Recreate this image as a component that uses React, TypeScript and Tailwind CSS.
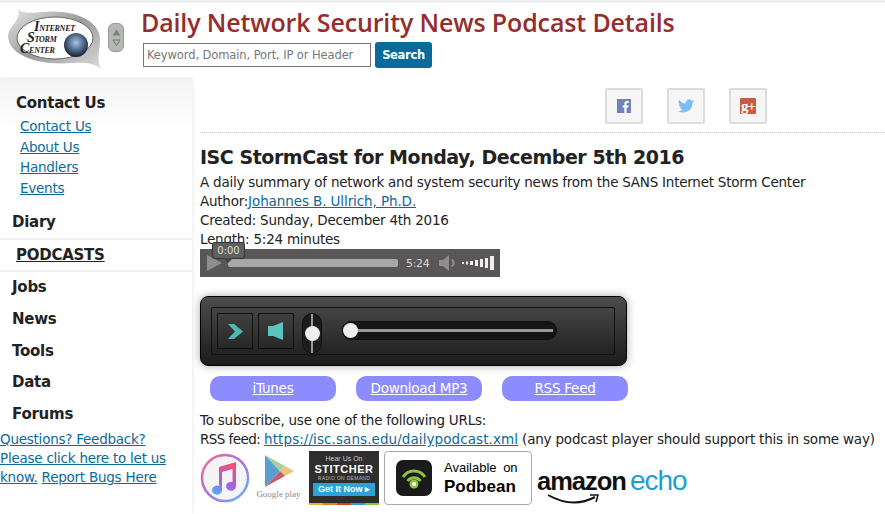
const SideHeading = ({ label }: { label: string }) => (
  <a className="block pl-3 text-[15px] font-bold leading-[22px] tracking-[-0.25px] text-[#222]">{label}</a>
);

const Logo = () => (
  <svg width="104" height="70" viewBox="0 0 104 70" className="shrink-0">
    <defs>
      <linearGradient id="ring" x1="0" y1="0" x2="1" y2="1">
        <stop offset="0" stopColor="#e8e8e8" />
        <stop offset="0.5" stopColor="#9a9a9a" />
        <stop offset="1" stopColor="#dadada" />
      </linearGradient>
      <radialGradient id="globe" cx="0.5" cy="0.4" r="0.6">
        <stop offset="0" stopColor="#a8c4e4" />
        <stop offset="0.6" stopColor="#47627f" />
        <stop offset="1" stopColor="#15202c" />
      </radialGradient>
    </defs>
    <path d="M14 5 C17 11 26 10 40 9 C70 6 96 18 96 36 C96 48 92 56 97 66 C90 60 82 59 68 60 C34 63 4 52 4 33 C4 23 18 18 14 5Z" fill="url(#ring)" />
    <ellipse cx="51" cy="35" rx="38" ry="21" fill="#fff" stroke="#666" strokeWidth="1" />
    <circle cx="72" cy="42" r="12" fill="url(#globe)" />
    <text x="30" y="28" fontFamily="'Liberation Serif', serif" fontSize="8" fontWeight="700" fontStyle="italic" fill="#222">
      <tspan fontSize="14">I</tspan>NTERNET
    </text>
    <text x="23" y="39" fontFamily="'Liberation Serif', serif" fontSize="8" fontWeight="700" fontStyle="italic" fill="#222">
      <tspan fontSize="14">S</tspan>TORM
    </text>
    <text x="16" y="50" fontFamily="'Liberation Serif', serif" fontSize="8" fontWeight="700" fontStyle="italic" fill="#222">
      <tspan fontSize="14">C</tspan>ENTER
    </text>
  </svg>
);

const ArrowPill = () => (
  <div className="mt-[20px] flex h-[29px] w-[16px] shrink-0 flex-col items-center justify-center gap-[3px] rounded-[6px] border border-[#999] bg-[#b4b9b4]">
    <svg width="9" height="7" viewBox="0 0 9 7"><path d="M4.5 0.5 8.5 6.5H0.5Z" fill="#7b827c" /></svg>
    <svg width="9" height="7" viewBox="0 0 9 7"><path d="M1 1H8L4.5 6.5Z" fill="none" stroke="#6f766f" /></svg>
  </div>
);

const SocialButton = ({ children }: { children: React.ReactNode }) => (
  <div className="flex h-[36px] w-[38px] items-center justify-center rounded-[2px] border-2 border-[#dcdcdc] bg-[#f6f6f6]">
    {children}
  </div>
);

const PillLink = ({ label }: { label: string }) => (
  <a className="flex h-[25px] w-[126px] items-center justify-center rounded-[10px] bg-[#8c8cff] text-white underline">
    {label}
  </a>
);

const AudioBar = () => (
  <div className="relative flex h-[28px] w-[300px] items-center bg-[#585656]">
    <svg width="16" height="16" viewBox="0 0 16 16" className="ml-[7px] shrink-0">
      <path d="M0 0 15 8 0 16Z" fill="#8e8e8e" />
    </svg>
    <div className="ml-[5px] h-[8px] w-[170px] rounded-[2px] bg-[#a8a8a8]" />
    <span className="ml-[8px] text-[11px] tracking-[-0.3px] text-[#d8d8d8]">5:24</span>
    <svg width="20" height="18" viewBox="0 0 20 18" className="ml-[8px] shrink-0">
      <path d="M1 6H5L11 1V17L5 12H1Z" fill="#8e8e8e" />
      <path d="M14 5.5Q17 9 14 12.5" fill="none" stroke="#8e8e8e" strokeWidth="2" />
    </svg>
    <svg width="34" height="14" viewBox="0 0 34 14" className="ml-[4px] shrink-0">
      <rect x="0" y="6" width="2" height="2" fill="#eee" />
      <rect x="4" y="5.5" width="2" height="3" fill="#eee" />
      <rect x="8" y="5" width="3" height="4" fill="#eee" />
      <rect x="13" y="4" width="3" height="6" fill="#eee" />
      <rect x="18" y="3" width="3" height="8" fill="#eee" />
      <rect x="23" y="2" width="3" height="10" fill="#eee" />
      <rect x="28" y="0" width="4" height="14" fill="#eee" />
    </svg>
    {/* time tooltip */}
    <div className="absolute left-[12px] top-[-7px] flex h-[17px] w-[33px] items-center justify-center rounded-[3px] border border-[#333] bg-[#5f5f5f] text-[10px] tracking-normal text-[#ddd]">
      0:00
      <span className="absolute bottom-[-5px] left-[10px] h-0 w-0 border-x-[5px] border-t-[5px] border-x-transparent border-t-[#444]" />
    </div>
  </div>
);

const SquareButton = ({ children }: { children: React.ReactNode }) => (
  <div className="flex h-[36px] w-[36px] shrink-0 items-center justify-center border border-[#111]">{children}</div>
);

const Player = () => (
  <div className="flex h-[70px] w-[427px] items-center rounded-[8px] border border-[#000] bg-linear-to-b from-[#4c4c4c] to-[#1c1c1c] pl-[10px] shadow-[0_0_8px_rgba(0,0,0,0.35)]">
    <div className="flex h-[48px] w-[404px] items-start gap-[5px] rounded-[2px] border border-[#111] pl-[5px] pt-[5px]">
      <SquareButton>
        <svg width="15" height="15" viewBox="0 0 15 15">
          <path d="M0 0H6L15 7.5 6 15H0L7 7.5Z" fill="#4fb8b4" />
        </svg>
      </SquareButton>
      <SquareButton>
        <svg width="16" height="18" viewBox="0 0 16 18">
          <path d="M0 4H5L15 0V18L5 14H0Z" fill="#5cc4c0" />
        </svg>
      </SquareButton>
      <div className="relative ml-[3px] flex h-[41px] w-[20px] shrink-0 justify-center rounded-[10px] border border-[#111] bg-[#1c1c1c]">
        <div className="h-full w-[2px] bg-[#999]" />
        <div className="absolute top-[12px] h-[15px] w-[15px] rounded-full bg-[#eee]" />
      </div>
      <div className="relative ml-[15px] mt-[8px] flex h-[19px] w-[215px] shrink-0 items-center rounded-[9px] border border-[#111] bg-[#151515] px-[3px]">
        <div className="h-[3px] w-full bg-[#999]" />
        <div className="absolute left-0 h-[15px] w-[15px] rounded-full bg-[#eee]" />
      </div>
    </div>
  </div>
);

const ItunesBadge = () => (
  <svg width="50" height="50" viewBox="0 0 50 50" className="shrink-0">
    <defs>
      <linearGradient id="itring" x1="0" y1="0" x2="1" y2="1">
        <stop offset="0" stopColor="#f0708a" />
        <stop offset="0.5" stopColor="#b06ce0" />
        <stop offset="1" stopColor="#50c0f8" />
      </linearGradient>
      <linearGradient id="itnote" x1="0.7" y1="0" x2="0.3" y2="1">
        <stop offset="0" stopColor="#f8506c" />
        <stop offset="0.6" stopColor="#a860e0" />
        <stop offset="1" stopColor="#58a8f0" />
      </linearGradient>
    </defs>
    <circle cx="25" cy="25" r="23" fill="#f4f4f6" stroke="url(#itring)" strokeWidth="2.5" />
    <path d="M19 14 36 9V33A5 4.5 0 1 1 32.5 29V16L22 19V37A5 4.5 0 1 1 19 33Z" fill="url(#itnote)" />
  </svg>
);

const GooglePlayBadge = () => (
  <div className="ml-[2px] flex w-[43px] shrink-0 flex-col items-center tracking-normal">
    <svg width="30" height="32" viewBox="0 0 30 32">
      <path d="M1 0 16 16 1 32Z" fill="#5a9fd0" />
      <path d="M1 0 21 11 16 16Z" fill="#a8cf9c" />
      <path d="M21 11 30 16 21 21 16 16Z" fill="#f0c47c" />
      <path d="M1 32 21 21 16 16Z" fill="#c75c6c" />
    </svg>
    <span className="whitespace-nowrap font-['Liberation_Serif',serif] text-[9px] leading-[14px] text-[#8a8a8a]">Google play</span>
  </div>
);

const StitcherBadge = () => (
  <div className="ml-[4px] flex h-[54px] w-[70px] shrink-0 flex-col items-center bg-[#2e2e2e] font-['Liberation_Sans',sans-serif] tracking-normal">
    <span className="mt-[3px] text-[7px] leading-[9px] text-[#ccc]">Hear Us On</span>
    <span className="text-[11px] font-bold leading-[12px] tracking-[0.5px] text-white">STITCHER</span>
    <span className="text-[5px] leading-[6px] tracking-[0.3px] text-[#bbb]">RADIO ON DEMAND</span>
    <span className="mt-[2px] flex h-[13px] w-[62px] items-center justify-center bg-[#2aa3d8] text-[9px] font-bold text-white">Get It Now ▸</span>
    <div className="mt-auto flex h-[2px] w-full">
      <div className="flex-1 bg-[#f2b21c]" />
      <div className="flex-1 bg-[#e8802a]" />
      <div className="flex-1 bg-[#d2412c]" />
      <div className="flex-1 bg-[#2aa3d8]" />
      <div className="flex-1 bg-[#8cc63f]" />
    </div>
  </div>
);

const PodbeanBadge = () => (
  <div className="flex h-[54px] w-[148px] shrink-0 items-center gap-[12px] rounded-[4px] border border-[#aaa] bg-white pl-[11px] font-['Liberation_Sans',sans-serif] tracking-normal text-black">
    <svg width="36" height="36" viewBox="0 0 36 36" className="shrink-0">
      <rect width="36" height="36" rx="7" fill="#1a1a1a" />
      <path d="M7 17A13 13 0 0 1 29 17" fill="none" stroke="#8cc63f" strokeWidth="3" />
      <path d="M11.5 21A8 8 0 0 1 24.5 21" fill="none" stroke="#8cc63f" strokeWidth="3" />
      <circle cx="18" cy="24" r="4.5" fill="#8cc63f" />
      <circle cx="18" cy="24" r="2" fill="#fff" />
    </svg>
    <div className="flex flex-col">
      <span className="whitespace-nowrap text-[13px] leading-[17px] [word-spacing:3px]">Available on</span>
      <span className="text-[17px] font-bold leading-[22px]">Podbean</span>
    </div>
  </div>
);

const EchoBadge = () => (
  <div className="relative h-[54px] w-[155px] shrink-0 font-['Liberation_Sans',sans-serif]">
    <div className="flex items-baseline pt-[15px] leading-[30px] tracking-[-1px]">
      <span className="text-[25.5px] font-bold text-[#111]">amazon</span>
      <span className="ml-[4px] text-[28px] text-[#1ba0d4]">echo</span>
    </div>
    <svg width="52" height="10" viewBox="0 0 52 10" className="absolute left-[10px] top-[43px]">
      <path d="M1 1Q26 15 48 3" fill="none" stroke="#111" strokeWidth="2" />
      <path d="M43 1 51 1 49 8" fill="none" stroke="#111" strokeWidth="1.5" />
    </svg>
  </div>
);

export default function App() {
  return (
    <div className="h-[514px] w-[885px] overflow-hidden bg-white font-['DejaVu_Sans',sans-serif] text-[13.5px] leading-[19px] tracking-[-0.24px] text-[#222]">
      {/* header */}
      <header className="flex h-[78px] border-t-[3px] border-[#eee] pl-[4px]">
        <Logo />
        <ArrowPill />
        <div className="ml-[17px]">
          <h1 className="mt-[2px] font-['Open_Sans',sans-serif] text-[25px] leading-[34px] font-semibold tracking-[-0.14px] whitespace-nowrap text-[#962d2d]">
            Daily Network Security News Podcast Details
          </h1>
          <div className="mt-[4px] flex gap-[4px] pl-[2px]">
            <input
              placeholder="Keyword, Domain, Port, IP or Header"
              className="h-[24px] w-[228px] border border-[#777] px-[3px] text-[11.5px] tracking-[-0.1px] placeholder:text-[#777]"
            />
            <button className="h-[26px] w-[57px] -translate-y-px rounded-[3px] bg-[#0a6a9c] text-[11.5px] font-bold tracking-[-0.3px] text-white">Search</button>
          </div>
        </div>
      </header>

      <div className="flex">
        {/* sidebar */}
        <aside className="h-[436px] w-[192px] shrink-0 shadow-[1px_0_3px_rgba(0,0,0,0.08)]">
          <div className="border-t border-[#eee] bg-linear-to-b from-[#f3f3f3] to-white to-[50px] pb-[3px] pt-[13px]">
            <div className="pl-1">
              <SideHeading label="Contact Us" />
            </div>
            <ul className="mt-[3px] pl-[20px] text-[#0a6a9c] underline">
              <li className="h-[20.5px]"><a>Contact Us</a></li>
              <li className="h-[20.5px]"><a>About Us</a></li>
              <li className="h-[20.5px]"><a>Handlers</a></li>
              <li className="h-[20.5px]"><a>Events</a></li>
            </ul>
            <div className="mt-[12px] pb-[2px] text-[15px] font-bold tracking-[-0.25px]">
              <a className="block pl-[12px] leading-[22px]">Diary</a>
            </div>
          </div>
          <div className="border-y-2 border-[#f0f0f0] py-[4px] pl-[16px] text-[15px] leading-[22px] font-bold tracking-[-0.25px] underline">PODCASTS</div>
          <nav className="flex flex-col gap-[9.75px] pt-[4px]">
            <SideHeading label="Jobs" />
            <SideHeading label="News" />
            <SideHeading label="Tools" />
            <SideHeading label="Data" />
            <SideHeading label="Forums" />
          </nav>
          <p className="mt-[5px] w-[172px] text-[#0a6a9c]">
            <a className="underline">Questions? Feedback? Please click here to let us know.</a> <a className="underline">Report Bugs Here</a>
          </p>
        </aside>

        {/* main */}
        <main className="ml-[8px] min-w-0 flex-1">
          <div className="flex gap-[24px] border-b border-dotted border-[#ccc] pb-[8px] pl-[405px] pt-[10px]">
            <SocialButton>
              <svg width="14" height="14" viewBox="0 0 14 14">
                <rect width="14" height="14" fill="#6f83b8" />
                <path d="M9.5 14V8.5H11.3L11.6 6.4H9.5V5C9.5 4.3 9.8 3.9 10.6 3.9H11.7V2C11.3 2 10.8 1.9 10.1 1.9 8.5 1.9 7.4 2.9 7.4 4.7V6.4H5.6V8.5H7.4V14Z" fill="#fff" />
              </svg>
            </SocialButton>
            <SocialButton>
              <svg width="16" height="14" viewBox="0 0 24 20">
                <path d="M24 2.4a9.8 9.8 0 0 1-2.8.8A4.9 4.9 0 0 0 23.3.5a9.8 9.8 0 0 1-3.1 1.2 4.9 4.9 0 0 0-8.4 4.5A14 14 0 0 1 1.7 1a4.9 4.9 0 0 0 1.5 6.6A4.9 4.9 0 0 1 1 7v.1a4.9 4.9 0 0 0 3.9 4.8 4.9 4.9 0 0 1-2.2.1 4.9 4.9 0 0 0 4.6 3.4A9.9 9.9 0 0 1 0 17.5 14 14 0 0 0 21.6 5.7 10 10 0 0 0 24 2.4Z" fill="#7cbdf2" />
              </svg>
            </SocialButton>
            <SocialButton>
              <div className="flex h-[16px] w-[16px] items-center justify-center rounded-[1px] bg-[#ca5a3f] font-['Liberation_Serif',serif] text-[15px] leading-[16px] font-bold tracking-[-1px] text-white">g+</div>
            </SocialButton>
          </div>

          <h2 className="mt-[11px] text-[19px] leading-[26px] font-bold tracking-[-0.46px] text-[#222]">ISC StormCast for Monday, December 5th 2016</h2>
          <p className="mt-[3px]">A daily summary of network and system security news from the SANS Internet Storm Center</p>
          <p>
            Author:<a className="tracking-[-0.1px] text-[#0a6a9c] underline">Johannes B. Ullrich, Ph.D.</a>
          </p>
          <p>Created: Sunday, December 4th 2016</p>
          <p>Length: 5:24 minutes</p>

          <div>
            <AudioBar />
          </div>
          <div className="mt-[19px]">
            <Player />
          </div>

          <div className="mt-[10px] flex gap-[20px] pl-[10px]">
            <PillLink label="iTunes" />
            <PillLink label="Download MP3" />
            <PillLink label="RSS Feed" />
          </div>

          <p className="mt-[10px]">To subscribe, use one of the following URLs:</p>
          <p className="whitespace-nowrap">
            <span className="tracking-[-0.55px]">RSS feed: </span>
            <a className="tracking-[0.08px] text-[#0a6a9c] underline">https://isc.sans.edu/dailypodcast.xml</a>{" "}
            <span className="tracking-[-0.2px]">(any podcast player should support this in some way)</span>
          </p>

          <div className="mt-[2px] flex items-center gap-[5px]">
            <ItunesBadge />
            <GooglePlayBadge />
            <StitcherBadge />
            <PodbeanBadge />
            <EchoBadge />
          </div>
        </main>
      </div>
    </div>
  );
}
